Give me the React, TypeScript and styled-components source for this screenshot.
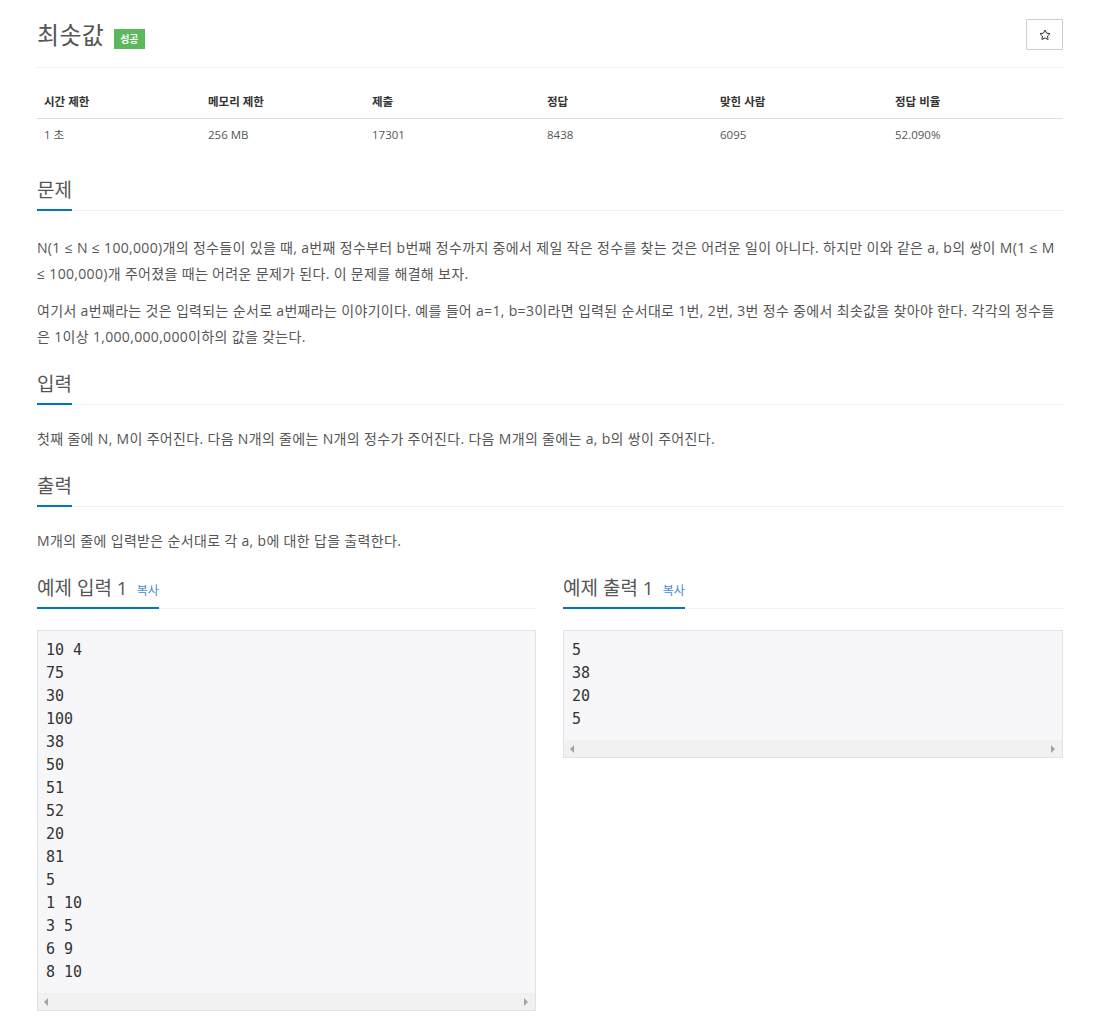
import styled, { createGlobalStyle } from 'styled-components'

const GlobalStyle = createGlobalStyle`
  body {
    margin: 0;
    background: #fff;
    color: #555;
    font-family: "Open Sans", "Noto Sans CJK KR", sans-serif;
  }
`

const Page = styled.div`
  width: 1026px;
  padding: 19px 39px 0 37px;
`

const PageHeader = styled.div`
  display: flex;
  justify-content: space-between;
  align-items: center;
  padding-bottom: 17px;
  border-bottom: 1px solid #eee;
`

const TitleWrap = styled.div`
  display: flex;
  align-items: center;
  gap: 10px;
`

const Title = styled.h1`
  margin: 0;
  font-size: 24px;
  font-weight: 400;
  line-height: 31px;
  letter-spacing: 0.3px;
  color: #555;
`

const Badge = styled.span`
  margin-top: 9px;
  padding: 0 6px;
  height: 20px;
  line-height: 20px;
  background: #5cb85c;
  color: #fff;
  font-size: 10px;
  font-weight: 700;
`

const StarButton = styled.button`
  width: 37px;
  height: 31px;
  padding: 0;
  display: flex;
  align-items: center;
  justify-content: center;
  background: #fff;
  border: 1px solid #ccc;
  border-radius: 1px;
`

const InfoTable = styled.table`
  width: 1026px;
  margin: 18px 0 28px;
  border-collapse: collapse;
  table-layout: fixed;
  font-size: 11.5px;

  th {
    padding: 8px 8px 8px 7px;
    line-height: 16px;
    text-align: left;
    font-weight: 700;
    color: #333;
    border-bottom: 1px solid #ddd;
  }

  td {
    padding: 8px 8px 8px 7px;
    line-height: 16px;
    color: #555;
  }
`

const Section = styled.section`
  margin-top: 23px;
`

const Headline = styled.h2`
  display: flex;
  margin: 0;
  font-size: 19px;
  font-weight: 400;
  line-height: 22px;
  color: #555;
  border-bottom: 1px dotted #e3e3e3;
`

const HeadlineText = styled.span`
  display: block;
  padding-bottom: 8px;
  margin-bottom: -1px;
  border-bottom: 2px solid #0076c0;
`

const CopyLink = styled.a`
  margin-left: 9px;
  font-size: 12px;
  line-height: 12px;
  color: #428bca;
  text-decoration: none;
`

const Body = styled.div<{ $gap: number }>`
  margin-top: ${(p) => p.$gap}px;
  font-size: 14px;
  line-height: 26px;
  letter-spacing: 0.33px;

  p {
    margin: 0;
  }

  p + p {
    margin-top: 11px;
  }
`

const Samples = styled.div`
  display: grid;
  grid-template-columns: 499px 500px;
  column-gap: 27px;
  margin-top: 23px;
`

const SampleBox = styled.div`
  margin-top: 21px;
  background: #f7f7f9;
  border: 1px solid #e1e1e8;
`

const SamplePre = styled.pre`
  margin: 0;
  padding: 8px 8px 9px;
  font-family: "DejaVu Sans Mono", monospace;
  font-size: 15px;
  line-height: 23px;
  color: #333;
`

const ScrollTrack = styled.div`
  height: 17px;
  display: flex;
  align-items: center;
  justify-content: space-between;
  padding: 0 7px 0 6px;
  background: #f1f1f1;
`

const Arrow = styled.span<{ $dir: 'left' | 'right' }>`
  width: 0;
  height: 0;
  border-top: 4px solid transparent;
  border-bottom: 4px solid transparent;
  ${(p) =>
    p.$dir === 'left'
      ? 'border-right: 4px solid #a3a3a3;'
      : 'border-left: 4px solid #a3a3a3;'}
`

const StarIcon = () => (
  <svg width="12" height="12" viewBox="0 0 24 24" fill="none">
    <polygon
      points="12 2 15.09 8.26 22 9.27 17 14.14 18.18 21.02 12 17.77 5.82 21.02 7 14.14 2 9.27 8.91 8.26"
      stroke="#333"
      strokeWidth="2"
      strokeLinejoin="miter"
    />
  </svg>
)

const columns = [
  { label: '시간 제한', value: '1 초', width: 164 },
  { label: '메모리 제한', value: '256 MB', width: 164 },
  { label: '제출', value: '17301', width: 175 },
  { label: '정답', value: '8438', width: 173 },
  { label: '맞힌 사람', value: '6095', width: 175 },
  { label: '정답 비율', value: '52.090%', width: 175 },
]

const sampleInput = `10 4
75
30
100
38
50
51
52
20
81
5
1 10
3 5
6 9
8 10`

const sampleOutput = `5
38
20
5`

interface SampleProps {
  title: string
  data: string
}

const Sample = ({ title, data }: SampleProps) => (
  <div>
    <Headline>
      <HeadlineText>
        {title}
        <CopyLink href="#">복사</CopyLink>
      </HeadlineText>
    </Headline>
    <SampleBox>
      <SamplePre>{data}</SamplePre>
      <ScrollTrack>
        <Arrow $dir="left" />
        <Arrow $dir="right" />
      </ScrollTrack>
    </SampleBox>
  </div>
)

const App = () => {
  return (
    <Page>
      <GlobalStyle />
      <PageHeader>
        <TitleWrap>
          <Title>최솟값</Title>
          <Badge>성공</Badge>
        </TitleWrap>
        <StarButton>
          <StarIcon />
        </StarButton>
      </PageHeader>

      <InfoTable>
        <colgroup>
          {columns.map((c) => (
            <col key={c.label} style={{ width: c.width }} />
          ))}
        </colgroup>
        <thead>
          <tr>
            {columns.map((c) => (
              <th key={c.label}>{c.label}</th>
            ))}
          </tr>
        </thead>
        <tbody>
          <tr>
            {columns.map((c) => (
              <td key={c.label}>{c.value}</td>
            ))}
          </tr>
        </tbody>
      </InfoTable>

      <Section>
        <Headline>
          <HeadlineText>문제</HeadlineText>
        </Headline>
        <Body $gap={24}>
          <p>
            N(1 ≤ N ≤ 100,000)개의 정수들이 있을 때, a번째 정수부터 b번째 정수까지 중에서 제일 작은 정수를
            찾는 것은 어려운 일이 아니다. 하지만 이와 같은 a, b의 쌍이 M(1 ≤ M ≤ 100,000)개 주어졌을 때는
            어려운 문제가 된다. 이 문제를 해결해 보자.
          </p>
          <p>
            여기서 a번째라는 것은 입력되는 순서로 a번째라는 이야기이다. 예를 들어 a=1, b=3이라면 입력된
            순서대로 1번, 2번, 3번 정수 중에서 최솟값을 찾아야 한다. 각각의 정수들은 1이상
            1,000,000,000이하의 값을 갖는다.
          </p>
        </Body>
      </Section>

      <Section>
        <Headline>
          <HeadlineText>입력</HeadlineText>
        </Headline>
        <Body $gap={21}>
          <p>첫째 줄에 N, M이 주어진다. 다음 N개의 줄에는 N개의 정수가 주어진다. 다음 M개의 줄에는 a, b의 쌍이 주어진다.</p>
        </Body>
      </Section>

      <Section>
        <Headline>
          <HeadlineText>출력</HeadlineText>
        </Headline>
        <Body $gap={21}>
          <p>M개의 줄에 입력받은 순서대로 각 a, b에 대한 답을 출력한다.</p>
        </Body>
      </Section>

      <Samples>
        <Sample title="예제 입력 1" data={sampleInput} />
        <Sample title="예제 출력 1" data={sampleOutput} />
      </Samples>
    </Page>
  )
}

export default App
